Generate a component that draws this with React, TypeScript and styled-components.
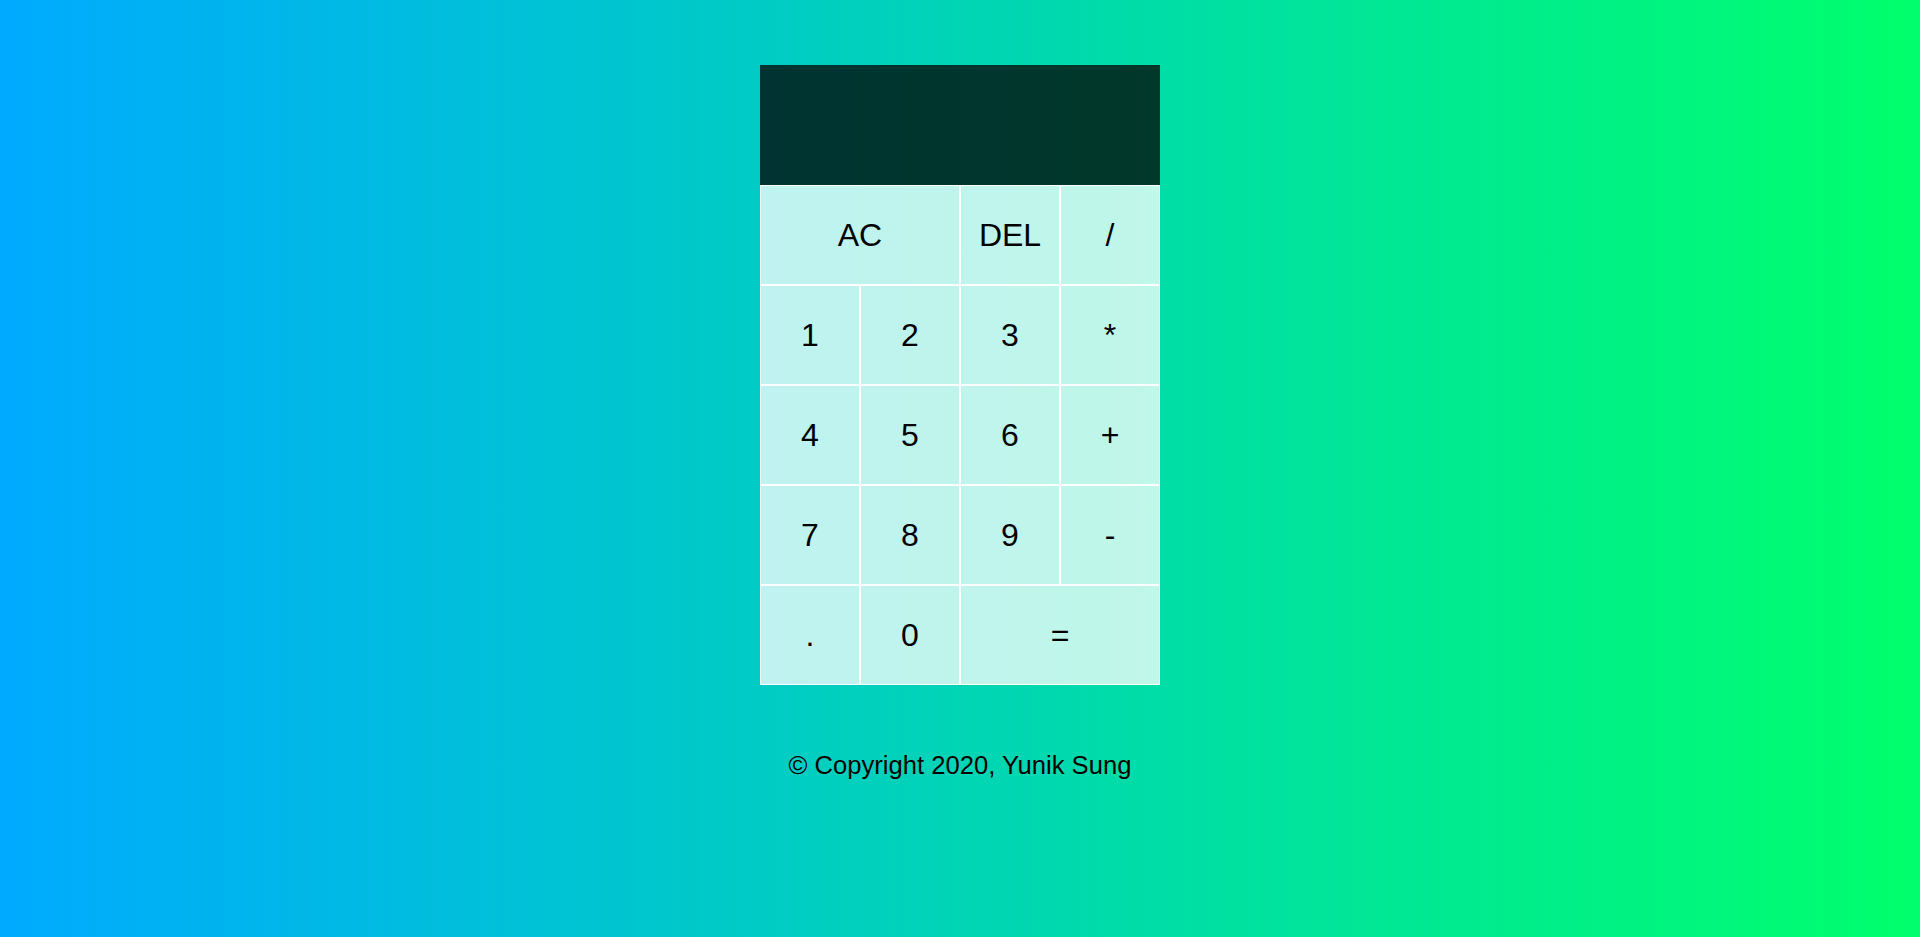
import React from 'react';
import styled, { createGlobalStyle } from 'styled-components';

const GlobalStyle = createGlobalStyle`
    *, *::before, *::after {
        box-sizing: border-box;
        font-family: "Liberation Sans", Arial, sans-serif;
        font-weight: normal;
    }
    body {
        margin: 0;
        padding: 0;
        min-height: 100vh;
        background: linear-gradient(to right, #00aaff, #00ff6c);
    }
`;

const Page = styled.div`
    display: flex;
    flex-direction: column;
    align-items: center;
    padding-top: 65px;
`;

const CalculatorGrid = styled.div`
    display: grid;
    grid-template-columns: repeat(4, 100px);
    grid-template-rows: minmax(120px, auto) repeat(5, 100px);
`;

const Output = styled.div`
    grid-column: 1 / -1;
    background-color: rgba(0, 0, 0, 0.75);
    display: flex;
    flex-direction: column;
    align-items: flex-end;
    justify-content: space-around;
    padding: 10px;
    word-wrap: break-word;
    word-break: break-all;
`;

const PreviousOperand = styled.div`
    color: rgba(255, 255, 255, 0.75);
    font-size: 1.5rem;
`;

const CurrentOperand = styled.div`
    color: white;
    font-size: 2.5rem;
`;

const Key = styled.button<{ $span?: boolean }>`
    cursor: pointer;
    font-size: 2rem;
    border: 1px solid white;
    outline: none;
    padding: 0;
    color: #000;
    background-color: rgba(255, 255, 255, 0.75);
    grid-column: ${(p) => (p.$span ? 'span 2' : 'auto')};

    &:hover {
        background-color: rgba(255, 255, 255, 0.9);
    }
`;

const Footer = styled.p`
    margin: 66px 0 0;
    font-size: 1.6rem;
    color: #000;
`;

const keys: { label: string; span?: boolean }[] = [
    { label: 'AC', span: true },
    { label: 'DEL' },
    { label: '/' },
    { label: '1' },
    { label: '2' },
    { label: '3' },
    { label: '*' },
    { label: '4' },
    { label: '5' },
    { label: '6' },
    { label: '+' },
    { label: '7' },
    { label: '8' },
    { label: '9' },
    { label: '-' },
    { label: '.' },
    { label: '0' },
    { label: '=', span: true },
];

const App = () => {
    return (
        <>
            <GlobalStyle />
            <Page>
                <CalculatorGrid>
                    <Output>
                        <PreviousOperand></PreviousOperand>
                        <CurrentOperand></CurrentOperand>
                    </Output>
                    {keys.map((k) => (
                        <Key key={k.label} $span={k.span}>
                            {k.label}
                        </Key>
                    ))}
                </CalculatorGrid>
                <Footer>© Copyright 2020, Yunik Sung</Footer>
            </Page>
        </>
    );
};

export default App;
